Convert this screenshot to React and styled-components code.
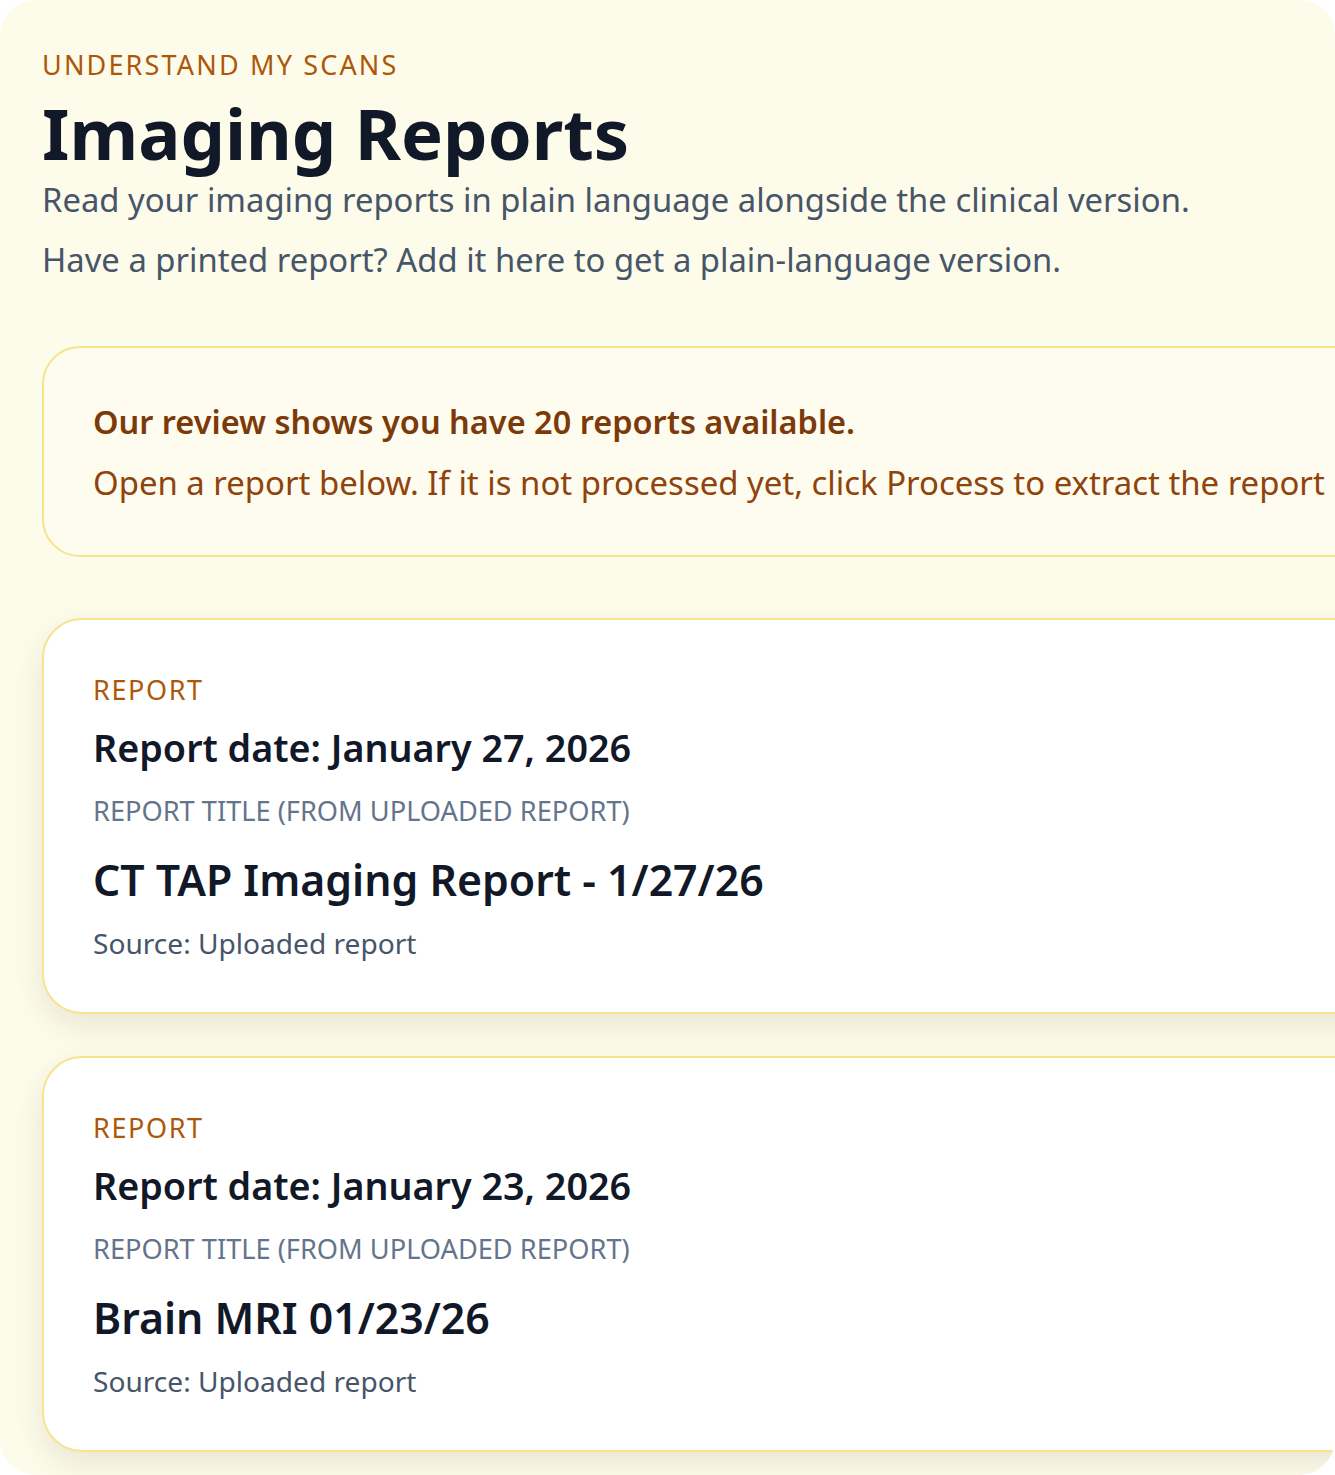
import React from "react";
import styled, { createGlobalStyle } from "styled-components";

const GlobalStyle = createGlobalStyle`
  html, body {
    margin: 0;
    padding: 0;
    background: #ffffff;
  }
  body {
    font-family: "Noto Sans", "Open Sans", sans-serif;
  }
`;

const Panel = styled.main`
  box-sizing: border-box;
  width: 100%;
  min-height: 1475px;
  padding: 47px 0 22px 42px;
  background: #fdfbea;
  border-radius: 36px;
  overflow: hidden;
`;

const Eyebrow = styled.div`
  margin: 0;
  font-size: 27px;
  line-height: 36px;
  letter-spacing: 0.08em;
  text-transform: uppercase;
  color: #ad5709;
`;

const Title = styled.h1`
  margin: 10px 0 0;
  font-size: 70.5px;
  line-height: 80px;
  font-weight: 700;
  color: #111827;
`;

const Lead = styled.p`
  margin: ${(p) => (p.$first ? "5px" : "16px")} 0 0;
  font-size: 32.8px;
  line-height: 44px;
  color: #475569;
  white-space: nowrap;
`;

const Stack = styled.div`
  display: flex;
  flex-direction: column;
  gap: 42px;
  width: 1420px;
  margin-top: 64px;
`;

const Notice = styled.section`
  box-sizing: border-box;
  padding: 52px 48px 50px 49px;
  background: #fefcee;
  border: 2px solid #f6e48f;
  border-radius: 38px;
  margin-bottom: 19px;
`;

const NoticeText = styled.p`
  margin: ${(p) => (p.$strong ? "0" : "17px 0 0")};
  font-size: ${(p) => (p.$strong ? "32.5px" : "32.9px")};
  line-height: 44px;
  font-weight: ${(p) => (p.$strong ? 600 : 400)};
  color: ${(p) => (p.$strong ? "#7c3a0a" : "#8f430d")};
  white-space: nowrap;
`;

const Card = styled.article`
  box-sizing: border-box;
  padding: 52px 48px 50px 49px;
  background: #ffffff;
  border: 2px solid #f6e48f;
  border-radius: 40px;
  box-shadow: 0 12px 30px rgba(60, 50, 20, 0.1);
`;

const Kicker = styled.div`
  font-size: 27px;
  line-height: 36px;
  letter-spacing: 0.06em;
  text-transform: uppercase;
  color: #ad5709;
`;

const DateLine = styled.h2`
  margin: 16px 0 0;
  font-size: 37.7px;
  line-height: 48px;
  font-weight: 600;
  color: #111827;
`;

const FieldLabel = styled.div`
  margin-top: 21px;
  font-size: 27.2px;
  line-height: 36px;
  text-transform: uppercase;
  color: #64748b;
`;

const ReportName = styled.h3`
  margin: 24px 0 0;
  font-size: 42.8px;
  line-height: 54px;
  font-weight: 600;
  color: #111827;
`;

const Source = styled.div`
  margin-top: 17px;
  font-size: 28.1px;
  line-height: 38px;
  color: #475569;
`;

const reports = [
  { date: "January 27, 2026", title: "CT TAP Imaging Report - 1/27/26" },
  { date: "January 23, 2026", title: "Brain MRI 01/23/26" },
];

const App = () => {
  return (
    <>
      <GlobalStyle />
      <Panel>
        <Eyebrow>Understand my scans</Eyebrow>
        <Title>Imaging Reports</Title>
        <Lead $first>
          Read your imaging reports in plain language alongside the clinical version.
        </Lead>
        <Lead>Have a printed report? Add it here to get a plain-language version.</Lead>

        <Stack>
          <Notice>
            <NoticeText $strong>Our review shows you have 20 reports available.</NoticeText>
            <NoticeText>
              Open a report below. If it is not processed yet, click Process to extract the report
            </NoticeText>
          </Notice>

          {reports.map((r, i) => (
            <Card key={i}>
              <Kicker>Report</Kicker>
              <DateLine>Report date: {r.date}</DateLine>
              <FieldLabel>Report title (from uploaded report)</FieldLabel>
              <ReportName>{r.title}</ReportName>
              <Source>Source: Uploaded report</Source>
            </Card>
          ))}
        </Stack>
      </Panel>
    </>
  );
};

export default App;
